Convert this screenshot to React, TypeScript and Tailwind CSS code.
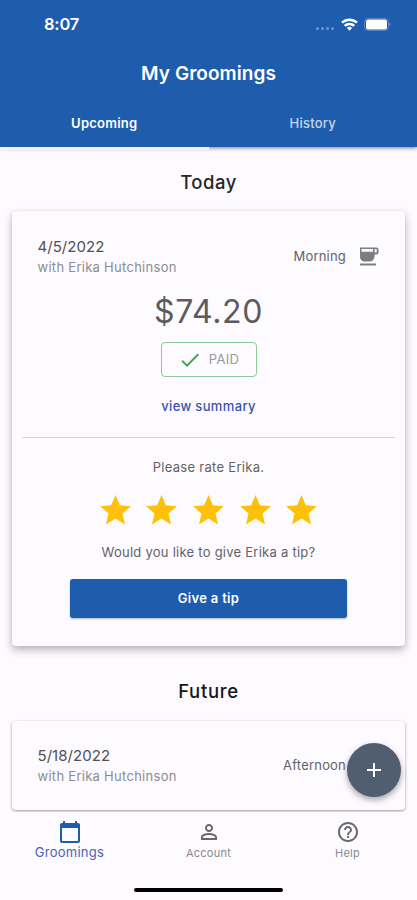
import {
  MdAdd,
  MdCalendarToday,
  MdCheck,
  MdHelpOutline,
  MdPersonOutline,
  MdStar,
} from "react-icons/md";

function StatusBar() {
  return (
    <div className="flex h-12 items-center justify-between pl-11 pr-[26px] text-white">
      <span className="text-[16.5px] font-semibold leading-5 tracking-[-0.2px]">8:07</span>
      <div className="flex items-center">
        <div className="mr-[7px] mt-2 flex gap-[2px] opacity-35">
          <span className="size-[3px] rounded-full bg-white" />
          <span className="size-[3px] rounded-full bg-white" />
          <span className="size-[3px] rounded-full bg-white" />
          <span className="size-[3px] rounded-full bg-white" />
        </div>
        <svg width="17" height="13" viewBox="0 0 17 13" fill="none" stroke="currentColor" strokeWidth="2.5">
          <path d="M1 4.7a10.7 10.7 0 0 1 15 0" />
          <path d="M3.7 7.9a6.9 6.9 0 0 1 9.6 0" />
          <path d="M8.5 12.7 5.9 10a3.8 3.8 0 0 1 5.2 0z" fill="currentColor" stroke="none" />
        </svg>
        <svg className="ml-1.5" width="27" height="13" viewBox="0 0 27 13">
          <rect x="0.5" y="0.5" width="24" height="12" rx="3.5" fill="none" stroke="white" strokeOpacity="0.25" />
          <rect x="2" y="1.5" width="21" height="10" rx="2" fill="white" />
          <path d="M25.5 4.5c1.2.6 1.2 3.4 0 4z" fill="white" fillOpacity="0.45" />
        </svg>
      </div>
    </div>
  );
}

function CupIcon() {
  return (
    <svg width="24" height="24" viewBox="0 0 24 24" fill="currentColor">
      <path
        fillRule="evenodd"
        d="M19.5 2.500H3v9c0 3 2 5 5 5h4.500c3 0 4.700-2 5-5l.2-2h1.800c1.100 0 2-.9 2-2v-3c0-1.110-.9-2-2-2zm-3.500 4.200H4.500V4H16zm3.700.8h-2V4h2z"
      />
      <path d="M3 18.500h16v2H3z" />
    </svg>
  );
}

function Appointment({ date, time, icon }: { date: string; time: string; icon?: React.ReactNode }) {
  return (
    <div className="flex items-center justify-between pl-[25.5px] pr-6">
      <div>
        <p className="text-[15px] leading-5 tracking-[0.05px] text-[#505054]">{date}</p>
        <p className="text-[13px] leading-5 tracking-[0.28px] text-[#8c8c90]">with Erika Hutchinson</p>
      </div>
      <div className="flex items-center gap-[11px] text-[#7d7d81]">
        <span className="text-[13px] tracking-[0.2px] text-[#626266]">{time}</span>
        <span className="size-6">{icon}</span>
      </div>
    </div>
  );
}

export default function App() {
  return (
    <div className="flex h-[900px] w-full flex-col overflow-hidden bg-[#fdfbff] font-['Inter','Liberation_Sans',sans-serif]">
      <header className="relative z-10 h-[147px] shrink-0 bg-[#1e5dae] shadow-[0_1px_4px_rgba(0,0,0,0.5)]">
        <StatusBar />
        <h1 className="h-[51px] text-center text-[19px] font-semibold leading-[51px] tracking-[0.05px] text-white">
          My Groomings
        </h1>
        <div className="grid h-12 grid-cols-2 text-center text-[13px] leading-[48px] tracking-[0.25px]">
          <span className="border-b-[3px] border-[#f3f1fa] font-semibold text-white">Upcoming</span>
          <span className="font-medium text-white/75">History</span>
        </div>
      </header>

      <main className="flex h-[665px] shrink-0 flex-col overflow-hidden px-3">
        <h2 className="mt-[23px] text-center text-[18.5px] font-medium leading-6 tracking-[0.5px] text-[#262628]">
          Today
        </h2>
        <section className="mt-[17px] h-[435px] shrink-0 rounded bg-[#fdfbff] pt-[26px] shadow-[0_4px_8px_rgba(0,0,0,0.28),0_0_3px_rgba(0,0,0,0.08)]">
          <Appointment date="4/5/2022" time="Morning" icon={<CupIcon />} />
          <p className="mt-[15px] text-center text-[32px] leading-10 tracking-[0.6px] text-[#5c5c60]">$74.20</p>
          <div className="mx-auto mt-[10px] flex h-[35px] w-24 items-center justify-center gap-[7px] rounded border border-[#8ccb97] text-[13px] tracking-[0.3px] text-[#98989c]">
            <MdCheck className="size-6 text-[#43a84d]" />
            PAID
          </div>
          <p className="mt-[19px] text-center text-[13px] font-medium leading-5 tracking-[0.35px] text-[#3555ad]">
            view summary
          </p>
          <hr className="mx-[10px] mt-[21px] border-[#d6d5da]" />
          <p className="mt-[19px] text-center text-[13px] leading-5 tracking-[0.3px] text-[#626266]">
            Please rate Erika.
          </p>
          <div className="mt-[15px] flex justify-center gap-[9.7px] text-[#ffc107]">
            {[1, 2, 3, 4, 5].map((n) => (
              <MdStar key={n} className="size-[37px]" />
            ))}
          </div>
          <p className="mt-[13px] text-center text-[13px] leading-5 tracking-[0.25px] text-[#626266]">
            Would you like to give Erika a tip?
          </p>
          <button className="mx-auto mt-[17px] block h-[39px] w-[277px] rounded-[3px] bg-[#1e5dae] text-[13px] font-semibold tracking-[0.3px] text-white shadow-[0_1px_2px_rgba(0,0,0,0.3)]">
            Give a tip
          </button>
        </section>

        <h2 className="mt-[33px] text-center text-[18.5px] font-medium leading-6 tracking-[0.7px] text-[#161618]">
          Future
        </h2>
        <section className="mt-[18px] h-[89px] shrink-0 rounded bg-[#fdfbff] pt-[25px] shadow-[0_1px_3px_rgba(0,0,0,0.4)]">
          <Appointment date="5/18/2022" time="Afternoon" />
        </section>
      </main>

      <nav className="grid h-[88px] shrink-0 grid-cols-3 pt-2 text-[11px] tracking-[0.25px] text-[#88888c]">
        <a className="flex flex-col items-center text-[#4a62b8]">
          <MdCalendarToday className="size-6 text-[#1e5dae]" />
          <span className="text-[13px] leading-4">Groomings</span>
        </a>
        <a className="flex flex-col items-center">
          <MdPersonOutline className="size-6 text-[#68686c]" />
          <span className="leading-[18px]">Account</span>
        </a>
        <a className="flex flex-col items-center">
          <MdHelpOutline className="size-6 text-[#68686c]" />
          <span className="leading-[18px]">Help</span>
        </a>
        <span className="col-span-3 mx-auto mb-2 h-1 w-[149px] self-end rounded-full bg-black" />
      </nav>

      <button className="absolute left-[347px] top-[743px] z-20 flex size-[54px] items-center justify-center rounded-full bg-[#505e70] text-white shadow-[0_3px_6px_rgba(0,0,0,0.35)]">
        <MdAdd className="size-6" />
      </button>
    </div>
  );
}
